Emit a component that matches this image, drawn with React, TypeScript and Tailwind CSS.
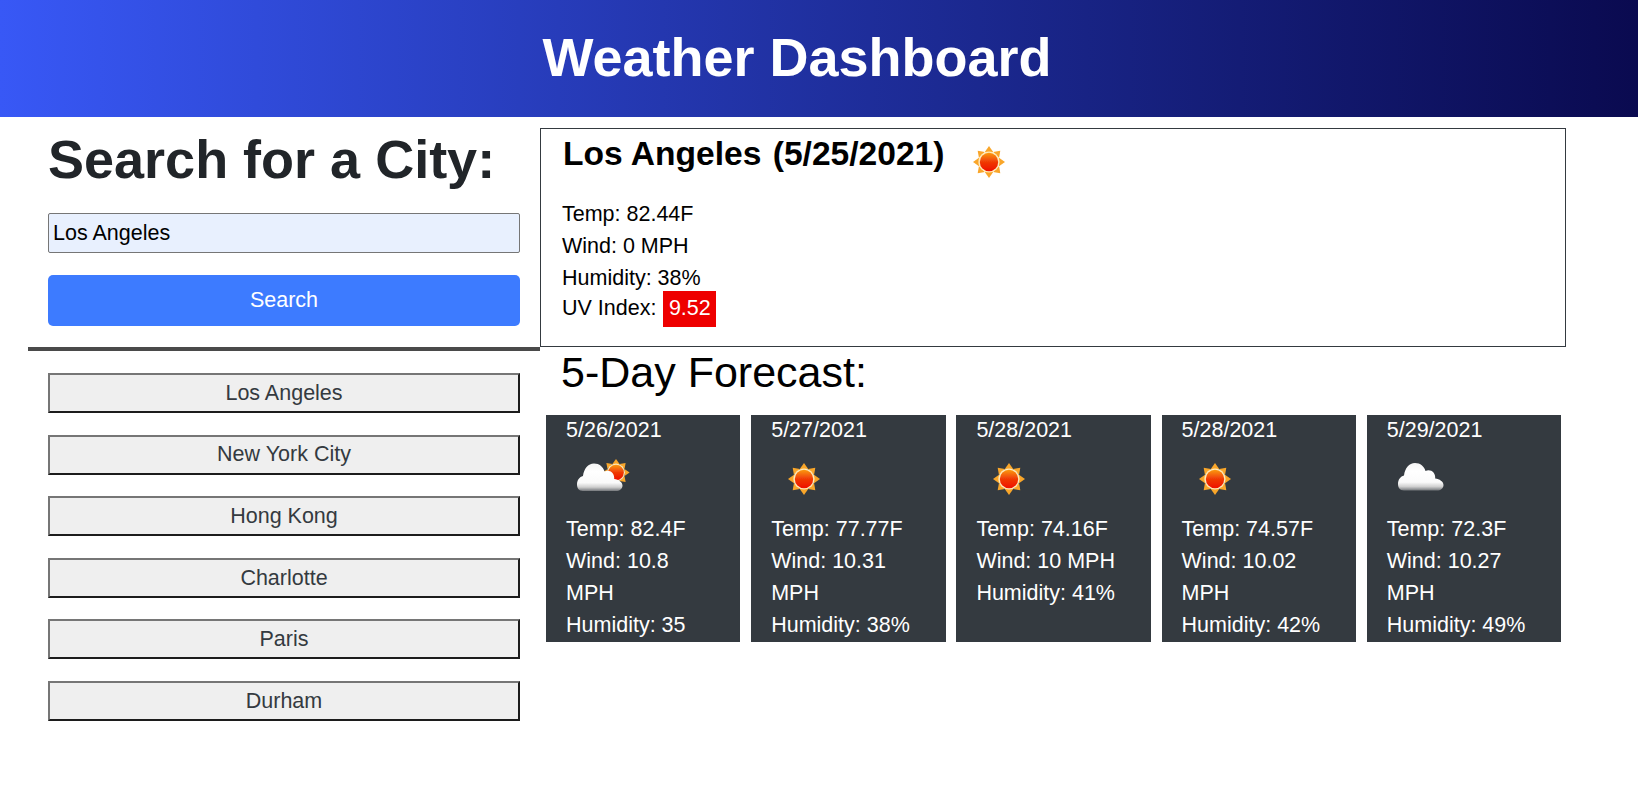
import React, { useId } from "react";

const font = { fontFamily: '"Liberation Sans", Arial, sans-serif' };

function SunShape({ cx, cy, scale = 1, id }: { cx: number; cy: number; scale?: number; id: string }) {
  const rays = [0, 45, 90, 135, 180, 225, 270, 315];
  return (
    <g transform={`translate(${cx} ${cy}) scale(${scale})`}>
      <defs>
        <linearGradient id={id} x1="0" y1="0" x2="0" y2="1">
          <stop offset="0" stopColor="#fb9a12" />
          <stop offset="0.5" stopColor="#f03a06" />
          <stop offset="1" stopColor="#ee0f00" />
        </linearGradient>
      </defs>
      {rays.map((r) => (
        <polygon key={r} points="-4.2,-10 4.2,-10 0,-16" fill="#f9a62a" transform={`rotate(${r})`} />
      ))}
      <circle r="10.6" fill="#ffe9b8" />
      <circle r="9.2" fill={`url(#${id})`} />
    </g>
  );
}

function CloudShape({ id, dx = 0, dy = 0 }: { id: string; dx?: number; dy?: number }) {
  return (
    <g transform={`translate(${dx} ${dy})`}>
      <defs>
        <linearGradient id={id} x1="0" y1="0" x2="0" y2="1">
          <stop offset="0" stopColor="#f4f4f4" />
          <stop offset="0.3" stopColor="#ffffff" />
          <stop offset="0.7" stopColor="#fafafa" />
          <stop offset="0.86" stopColor="#cfcfcf" />
          <stop offset="1" stopColor="#74777b" />
        </linearGradient>
      </defs>
      <path
        d="M9 36.5 C4.5 36.5 3 33 3 30 C3 25.5 5.5 22.5 9 21.5 C10 14 14 9 20 9 C25.5 9 29 12.5 30.5 17 C33 15.5 36.5 16 38.5 18.5 C40 20.5 40.3 22.5 40.2 24.5 C44.5 25 48.5 27.5 48.5 31 C48.5 34.5 45.5 36.5 42 36.5 Z"
        fill={`url(#${id})`}
      />
    </g>
  );
}

function WeatherIcon({ kind, className }: { kind: "sun" | "few" | "cloud"; className: string }) {
  const raw = useId().replace(/[^a-zA-Z0-9]/g, "");
  return (
    <svg viewBox={kind === "few" ? "0 0 60 50" : "0 0 50 50"} className={className} aria-hidden="true">
      <defs>
        <filter id={`b${raw}`} x="-10%" y="-10%" width="120%" height="120%">
          <feGaussianBlur stdDeviation={kind === "sun" ? 0.55 : 0.75} />
        </filter>
      </defs>
      <g filter={`url(#b${raw})`}>
        {kind === "sun" && <SunShape cx={25} cy={25} id={`s${raw}`} />}
        {kind === "few" && (
          <>
            <SunShape cx={42} cy={18.5} scale={0.85} id={`s${raw}`} />
            <CloudShape id={`c${raw}`} dy={0.5} />
          </>
        )}
        {kind === "cloud" && <CloudShape id={`c${raw}`} />}
      </g>
    </svg>
  );
}

const cities = ["Los Angeles", "New York City", "Hong Kong", "Charlotte", "Paris", "Durham"];

const days: { date: string; icon: "sun" | "few" | "cloud"; temp: string; wind: string; hum: string }[] = [
  { date: "5/26/2021", icon: "few", temp: "82.4F", wind: "10.8 MPH", hum: "35" },
  { date: "5/27/2021", icon: "sun", temp: "77.77F", wind: "10.31 MPH", hum: "38%" },
  { date: "5/28/2021", icon: "sun", temp: "74.16F", wind: "10 MPH", hum: "41%" },
  { date: "5/28/2021", icon: "sun", temp: "74.57F", wind: "10.02 MPH", hum: "42%" },
  { date: "5/29/2021", icon: "cloud", temp: "72.3F", wind: "10.27 MPH", hum: "49%" },
];

export default function App() {
  return (
    <div style={font} className="min-h-[792px] bg-white text-black">
      <header className="flex h-[117px] items-center justify-center bg-gradient-to-r from-[#3858f6] to-[#0a0a50] pb-[3px] pr-[44px]">
        <h1 className="text-[54px] font-bold leading-none text-white">Weather Dashboard</h1>
      </header>

      <div className="flex pl-[28px] pr-[72px]">
        <aside className="w-[512px] shrink-0">
          <div className="px-[20px]">
            <h2 className="mt-[10px] text-[54px] font-bold leading-[64px] text-[#212529]">Search for a City:</h2>
            <input
              readOnly
              value="Los Angeles"
              className="mt-[22px] block h-[40px] w-full rounded-[2px] border border-[#767676] bg-[#e8f0fe] px-[4px] text-[21.5px] text-black outline-none"
            />
            <button className="mt-[22px] block h-[51px] w-full rounded-[5px] bg-[#3d7bff] text-[21.5px] text-white">Search</button>
          </div>
          <div className="mt-[21px] h-[4px] bg-[#4a4a4a]" />
          <ul className="mt-[22px] flex flex-col gap-[21.6px] px-[20px]">
            {cities.map((c) => (
              <li key={c}>
                <button className="block h-[40px] w-full border-2 border-b-[#1c1c1c] border-l-[#767676] border-r-[#1c1c1c] border-t-[#767676] bg-[#efefef] text-[21.5px] text-[#343a40]">
                  {c}
                </button>
              </li>
            ))}
          </ul>
        </aside>

        <main className="min-w-0 flex-1">
          <section className="mt-[11px] h-[219px] border border-[#343a40] pl-[21px]">
            <div className="flex items-start">
              <h3 className="ml-[1px] mt-[5px] text-[33.6px] font-bold leading-[40px]">
                Los Angeles <span className="ml-[2px]">(5/25/2021)</span>
              </h3>
              <WeatherIcon kind="sun" className="ml-[20px] mt-[8px] h-[50px] w-[50px]" />
            </div>
            <div className="mt-[11px] text-[21.5px] leading-[32px]">
              <p>Temp: 82.44F</p>
              <p>Wind: 0 MPH</p>
              <p>Humidity: 38%</p>
              <p className="-mt-[3px]">
                UV Index: <span className="ml-[1px] inline-block h-[36px] bg-[#ee0000] px-[5.5px] leading-[35px] text-white">9.52</span>
              </p>
            </div>
          </section>

          <h3 className="ml-[21px] text-[43px] leading-[50px]">5-Day Forecast:</h3>

          <div className="ml-[6px] mt-[18px] flex gap-[10.8px]">
            {days.map((d, i) => (
              <article key={i} className="h-[227px] w-[194.4px] overflow-hidden bg-[#343a40] px-[20px] text-[21.5px] leading-[32px] text-white">
                <p className="-mt-[1px]">{d.date}</p>
                {d.icon === "few" ? (
                  <WeatherIcon kind="few" className="ml-[8px] mt-[8px] h-[50px] w-[60px]" />
                ) : (
                  <WeatherIcon kind={d.icon} className="ml-[8px] mt-[8px] h-[50px] w-[50px]" />
                )}
                <div className="mt-[9px]">
                  <p>Temp: {d.temp}</p>
                  <p>Wind: {d.wind}</p>
                  <p>Humidity: {d.hum}</p>
                </div>
              </article>
            ))}
          </div>
        </main>
      </div>
    </div>
  );
}
